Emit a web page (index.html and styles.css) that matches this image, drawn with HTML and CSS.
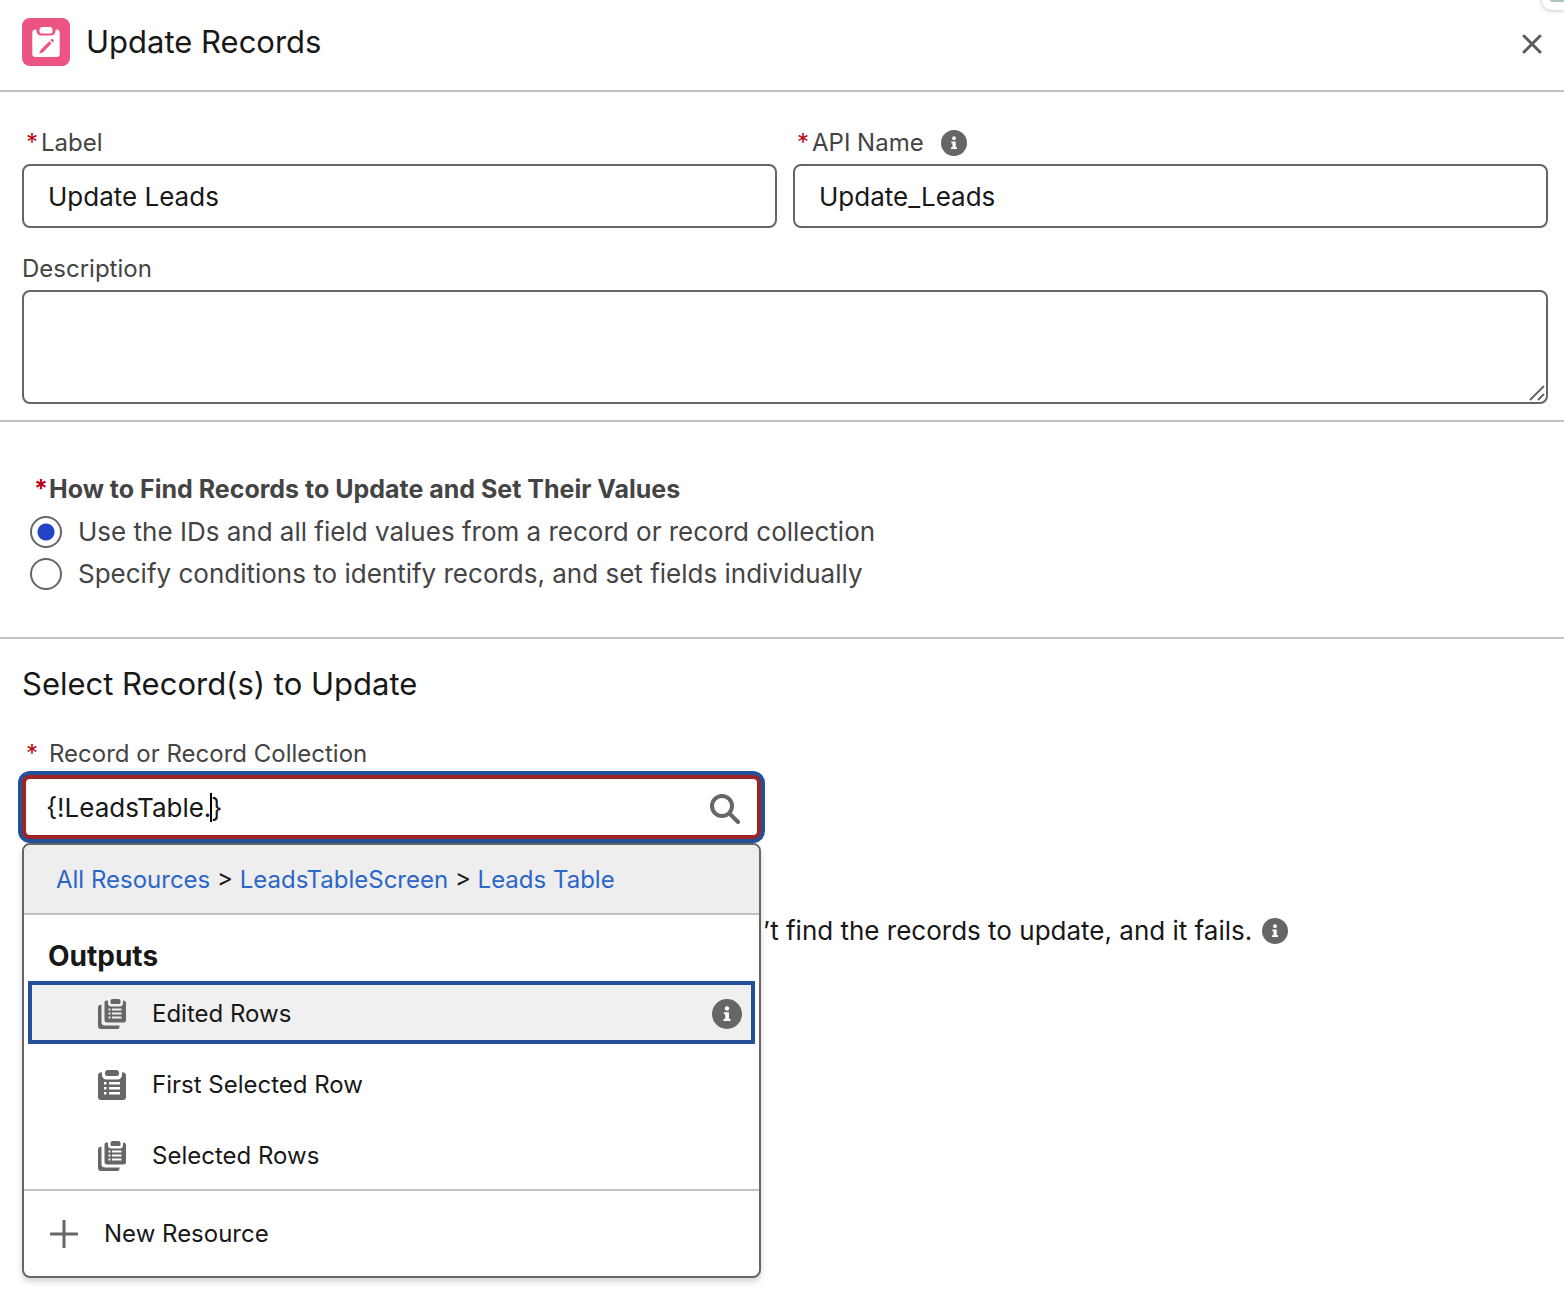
FILE: index.html
```html
<!DOCTYPE html>
<html lang="en">
<head>
<meta charset="utf-8">
<title>Update Records</title>
<link rel="stylesheet" href="styles.css">
</head>

<body>

<!-- shared icons -->
<svg class="sprite" aria-hidden="true">
  <symbol id="info" viewBox="0 0 26 26">
    <circle cx="13" cy="13" r="13" fill="#666"/>
    <circle cx="13" cy="8.2" r="1.9" fill="#fff"/>
    <path d="M10.3 11.4h4.4v5.8h1.3v1.9h-6v-1.9h1.5v-3.9h-1.2z" fill="#fff"/>
  </symbol>
  <symbol id="record" viewBox="0 0 28 30">
    <path fill="#666" d="M10 0h8a3 3 0 0 1 3 3v1a2 2 0 0 1-2 2H9a2 2 0 0 1-2-2V3a3 3 0 0 1 3-3z"/>
    <path fill="#666" fill-rule="evenodd" d="M4 2.5V5a4.5 4.5 0 0 0 4.5 4.5h11A4.5 4.5 0 0 0 24 5V2.5a3 3 0 0 1 4 3V27a3 3 0 0 1-3 3H3a3 3 0 0 1-3-3V5.5a3 3 0 0 1 4-3zM6 12v2.5h2.5V12zm5 0v2.5h11V12zM6 17v2.5h2.5V17zm5 0v2.5h11V17zM6 22v2.5h2.5V22zm5 0v2.5h11V22z"/>
  </symbol>
  <symbol id="collection" viewBox="0 0 28 30">
    <path fill="#666" d="M14.5 0h6a2 2 0 0 1 2 2v1.5a1.5 1.5 0 0 1-1.5 1.5h-7a1.5 1.5 0 0 1-1.5-1.5V2a2 2 0 0 1 2-2z"/>
    <path fill="#666" fill-rule="evenodd" d="M10 1.7V4a3.5 3.5 0 0 0 3.5 3.5h8A3.5 3.5 0 0 0 25 4V1.7a2.4 2.4 0 0 1 3 2.4V21a2.5 2.5 0 0 1-2.5 2.5H9A2.5 2.5 0 0 1 6.5 21V4.1A2.4 2.4 0 0 1 10 1.7zM10.5 9.5v2h2v-2zm3.5 0v2h9.5v-2zM10.5 13.5v2h2v-2zm3.5 0v2h9.5v-2zM10.5 17.5v2h2v-2zm3.5 0v2h9.5v-2z"/>
    <path fill="#666" d="M3.5 5.8V23A3.5 3.5 0 0 0 7 26.500h14.500V28a2 2 0 0 1-2 2H3a3 3 0 0 1-3-3V8.500a2.700 2.700 0 0 1 3.500-2.700z"/>
  </symbol>
</svg>

<div class="corner"></div>

<header class="header">
  <svg class="header-icon" viewBox="0 0 48 48" aria-hidden="true">
    <rect width="48" height="48" rx="8" fill="#eb5483"/>
    <path fill="#fff" d="M20.500 9h7a3 3 0 0 1 3 3v1.500a2 2 0 0 1-2 2h-9a2 2 0 0 1-2-2V12a3 3 0 0 1 3-3z"/>
    <path fill="#fff" d="M14.500 11.800V13a4.500 4.500 0 0 0 4.500 4.500h10a4.500 4.500 0 0 0 4.500-4.500v-1.200a3 3 0 0 1 4.200 3V36a3 3 0 0 1-3 3H13.300a3 3 0 0 1-3-3V14.800a3 3 0 0 1 4.200-3z"/>
    <path fill="#eb5483" d="M27.300 23.300l2.200 2.200-8.300 8.600-3.200 1.500c-.4.100-.7-.2-.6-.6l1.400-3.300zM28.400 22.200l.9-.9c.4-.4 1-.4 1.400 0l.8.800c.4.400.4 1 0 1.400l-.9.900z"/>
  </svg>
  <h1>Update Records</h1>
  <button class="close" type="button" aria-label="Close">
    <svg width="20" height="20" viewBox="0 0 20 20"><path d="M2 2l16 16M18 2L2 18" stroke="#5c5c5c" stroke-width="3" stroke-linecap="round"/></svg>
  </button>
</header>

<form>
  <section class="details">
    <div class="field">
      <div class="label"><span class="req">*</span><label for="label">Label</label></div>
      <input class="text" id="label" type="text" value="Update Leads">
    </div>
    <div class="field">
      <div class="label"><span class="req">*</span><label for="api">API Name</label><svg class="info label-info"><use href="#info"/></svg></div>
      <input class="text" id="api" type="text" value="Update_Leads">
    </div>
    <div class="field wide">
      <div class="label description"><label for="description">Description</label></div>
      <div class="area">
        <textarea class="text" id="description"></textarea>
        <svg class="grip" width="16" height="16" viewBox="0 0 16 16" aria-hidden="true"><path d="M1 15L15 1M9 15l6-6" stroke="#666" stroke-width="2"/></svg>
      </div>
    </div>
  </section>

  <section class="find">
    <fieldset>
      <legend><span class="req">*</span>How to Find Records to Update and Set Their Values</legend>
      <label class="choice"><input type="radio" name="find" checked>Use the IDs and all field values from a record or record collection</label>
      <label class="choice"><input type="radio" name="find">Specify conditions to identify records, and set fields individually</label>
    </fieldset>
  </section>

  <section class="select">
    <h2>Select Record(s) to Update</h2>
    <div class="label spaced"><span class="req">*</span><label for="record-input">Record or Record Collection</label></div>
    <div class="combobox">
      <input class="text error" id="record-input" type="text" value="{!LeadsTable.}">
      <span class="caret"></span>
      <svg class="search" width="30" height="30" viewBox="0 0 30 30" fill="none" stroke="#666" aria-hidden="true"><circle cx="12" cy="12" r="10" stroke-width="4"/><path d="M19.500 19.500L28 28" stroke-width="4" stroke-linecap="round"/></svg>

      <div class="dropdown">
        <nav class="crumbs">
          <a href="#">All Resources</a> <span>&gt;</span> <a href="#">LeadsTableScreen</a> <span>&gt;</span> <a href="#">Leads Table</a>
        </nav>
        <h3>Outputs</h3>
        <ul>
          <li><button class="option active" type="button"><svg class="type"><use href="#collection"/></svg>Edited Rows<svg class="info"><use href="#info"/></svg></button></li>
          <li><button class="option" type="button"><svg class="type"><use href="#record"/></svg>First Selected Row</button></li>
          <li><button class="option" type="button"><svg class="type"><use href="#collection"/></svg>Selected Rows</button></li>
        </ul>
        <button class="new" type="button">
          <svg width="28" height="28" viewBox="0 0 28 28" aria-hidden="true"><path d="M14 1v26M1 14h26" stroke="#666" stroke-width="3" stroke-linecap="round"/></svg>New Resource
        </button>
      </div>
    </div>
    <p class="hint">’t find the records to update, and it fails.<svg class="info"><use href="#info"/></svg></p>
  </section>
</form>

</body>
</html>
```

FILE: styles.css
```css
* {
  box-sizing: border-box;
}

body {
  margin: 0;
  background-color: white;
  color: #181818;
  font-family: Inter, "Liberation Sans", sans-serif;
  font-size: 26px;
  line-height: 32px;
}

h1, h2, h3, p, ul {
  margin: 0;
  padding: 0;
}

h1, h2 {
  font-size: 31px;
  font-weight: 400;
  line-height: 40px;
}

button, input, textarea {
  font: inherit;
  color: inherit;
}

button {
  border: none;
  background: none;
  padding: 0;
  text-align: left;
}

ul {
  list-style: none;
}

svg {
  flex: none;
}

.sprite {
  position: absolute;
  width: 0;
  height: 0;
}

/* edge of the toolbar behind the panel */
.corner {
  position: absolute;
  top: 0;
  right: 0;
  width: 22px;
  height: 10px;
  border-left: 8px solid white;
  border-bottom: 8px solid white;
  border-bottom-left-radius: 10px;
  background-color: #a9c4bb;
  box-shadow: 0 0 4px 1px #ccc;
}

.header {
  display: flex;
  align-items: center;
  gap: 16px;
  padding: 18px 22px 24px;
  border-bottom: 2px solid #c2c2c2;
}

.header-icon {
  width: 48px;
  height: 48px;
}

.close {
  display: flex;
  margin-left: auto;
  padding-top: 4px;
}

.details {
  display: grid;
  grid-template-columns: 1fr 1fr;
  gap: 24px 16px;
  padding: 34px 16px 16px 22px;
  border-bottom: 2px solid #c2c2c2;
}

.wide {
  grid-column: 1 / -1;
}

.label {
  display: flex;
  align-items: center;
  height: 34px;
  margin-bottom: 4px;
  padding-left: 4px;
  color: #444;
  font-size: 24px;
}

.description {
  padding-left: 0;
}

.req {
  width: 15px;
  color: #ba0517;
}

.spaced .req {
  width: 23px;
}

.info {
  width: 26px;
  height: 26px;
}

.label-info {
  margin-left: 17px;
}

.text {
  display: block;
  width: 100%;
  height: 64px;
  padding: 0 24px;
  border: 2px solid #666;
  border-radius: 8px;
  background-color: white;
  outline: none;
}

.area {
  position: relative;
}

textarea.text {
  height: 114px;
  padding: 16px 24px;
  resize: none;
}

.grip {
  position: absolute;
  right: 3px;
  bottom: 3px;
}

.find {
  padding: 51px 30px 42px;
  border-bottom: 2px solid #c2c2c2;
  color: #444;
}

fieldset {
  margin: 0;
  padding: 0;
  border: none;
}

legend {
  display: flex;
  padding: 0 4px 6px;
  font-size: 25px;
  font-weight: 700;
}

.choice {
  display: flex;
  align-items: center;
  gap: 16px;
  height: 42px;
}

.choice input {
  appearance: none;
  width: 32px;
  height: 32px;
  margin: 0;
  border: 2px solid #666;
  border-radius: 50%;
}

.choice input:checked {
  background: radial-gradient(circle, #2244c4 8px, white 9px);
}

.select {
  padding: 25px 16px 353px 22px;
}

.select h2 {
  margin-bottom: 33px;
}

.combobox {
  position: relative;
  width: calc(50% - 24px);
}

.text.error {
  padding: 0 20px;
  border: 4px solid #9c2424;
  box-shadow: 0 0 0 4px #24509a;
}

.caret {
  position: absolute;
  top: 18px;
  left: 188px;
  width: 2px;
  height: 29px;
  background-color: black;
}

.search {
  position: absolute;
  top: 19px;
  right: 21px;
}

.dropdown {
  position: absolute;
  top: 68px;
  left: 0;
  z-index: 1;
  width: 100%;
  border: 2px solid #666;
  border-radius: 8px;
  background-color: white;
  box-shadow: 0 4px 6px rgba(0, 0, 0, 0.16);
  font-size: 24px;
}

.crumbs {
  padding: 19px 32px 17px;
  border-bottom: 2px solid #c2c2c2;
  border-radius: 6px 6px 0 0;
  background-color: #eee;
}

.crumbs a {
  color: #2c66c8;
  text-decoration: none;
}

.dropdown h3 {
  padding: 25px 24px 9px;
  font-size: 28px;
  font-weight: 700;
}

.dropdown ul {
  display: grid;
  gap: 8px;
  padding: 0 4px 3px;
}

.option {
  display: flex;
  align-items: center;
  width: 100%;
  height: 63px;
  padding: 3px 9px 0 66px;
  border: 4px solid transparent;
}

.option.active {
  border-color: #24509a;
  background-color: #f0f0f0;
}

.type {
  width: 28px;
  height: 30px;
  margin-right: 26px;
}

.option .info {
  width: 30px;
  height: 30px;
  margin-left: auto;
}

.new {
  display: flex;
  align-items: center;
  gap: 26px;
  width: 100%;
  height: 87px;
  padding: 0 26px;
  border-top: 2px solid #c2c2c2;
}

.hint {
  display: flex;
  align-items: center;
  gap: 10px;
  margin-top: 76px;
  padding-left: calc(50% - 22px);
}
```
